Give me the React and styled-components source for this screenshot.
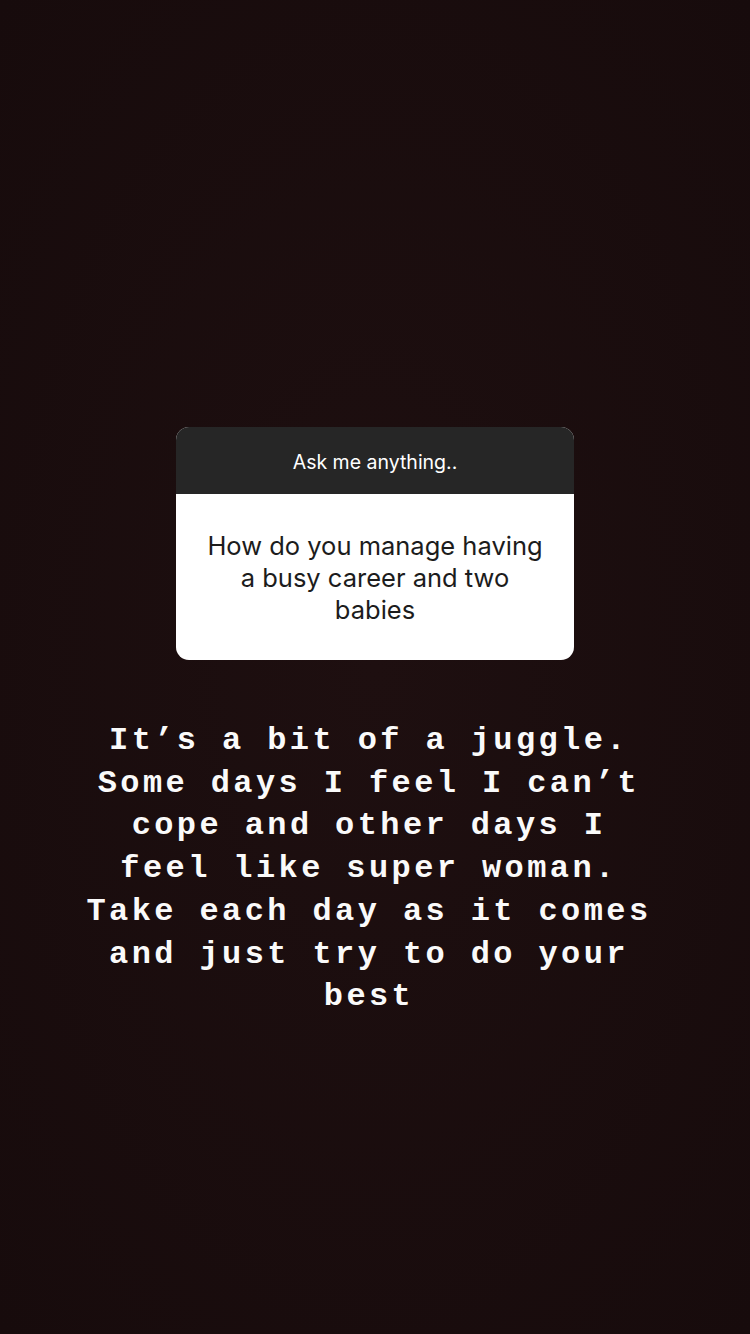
import React from "react";
import styled, { createGlobalStyle } from "styled-components";

const GlobalStyle = createGlobalStyle`
  html, body {
    margin: 0;
    padding: 0;
    background: #1a0d0e;
  }
`;

const Screen = styled.div`
  width: 750px;
  height: 1334px;
  background: radial-gradient(ellipse at center, #1e0f10 0%, #170b0c 100%);
  display: flex;
  flex-direction: column;
  align-items: center;
  padding-top: 427px;
  box-sizing: border-box;
  overflow: hidden;
`;

const Card = styled.div`
  width: 398px;
  border-radius: 13px;
  overflow: hidden;
  background: #fff;
  font-family: Inter, "Liberation Sans", sans-serif;
`;

const CardHeader = styled.div`
  height: 67px;
  padding-top: 3px;
  box-sizing: border-box;
  background: #262626;
  color: #fff;
  font-size: 19.5px;
  display: flex;
  align-items: center;
  justify-content: center;
`;

const Question = styled.div`
  padding: 36px 10px 34px;
  color: #1c1c1c;
  font-size: 25.5px;
  line-height: 32px;
  text-align: center;
`;

const Reply = styled.div`
  margin-top: 60px;
  padding-right: 12px;
  color: #fafafa;
  font-family: "Liberation Mono", "Courier New", monospace;
  font-weight: bold;
  font-size: 32px;
  letter-spacing: 3.4px;
  line-height: 42.7px;
  text-align: center;
`;

const Line = styled.div`
  white-space: pre;
`;

const replyLines = [
  "It’s a bit of a juggle.",
  "Some days I feel I can’t",
  "cope and other days I",
  "feel like super woman.",
  "Take each day as it comes",
  "and just try to do your",
  "best",
];

const App = () => {
  return (
    <>
      <GlobalStyle />
      <Screen>
        <Card>
          <CardHeader>Ask me anything..</CardHeader>
          <Question>
            How do you manage having
            <br />a busy career and two
            <br />babies
          </Question>
        </Card>
        <Reply>
          {replyLines.map((l) => (
            <Line key={l}>{l}</Line>
          ))}
        </Reply>
      </Screen>
    </>
  );
};

export default App;
